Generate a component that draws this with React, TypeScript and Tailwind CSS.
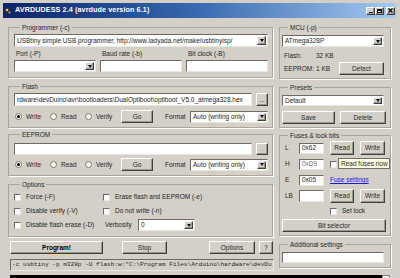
import React from 'react';

const raised =
  'bg-[#d4d0c8] border border-t-white border-l-white border-r-[#404040] border-b-[#404040] shadow-[inset_-1px_-1px_0_#9a968e]';

function Btn({ children, className = '', bold = false }: { children: React.ReactNode; className?: string; bold?: boolean }) {
  return (
    <div className={`flex items-center justify-center shrink-0 ${raised} ${bold ? 'font-bold text-[#000]' : ''} ${className}`}>
      {children}
    </div>
  );
}

function Field({ text = '', className = '', mono = false, gray = false }: { text?: string; className?: string; mono?: boolean; gray?: boolean }) {
  return (
    <div
      className={`flex items-center overflow-hidden whitespace-nowrap bg-white border border-t-[#6f6b64] border-l-[#6f6b64] border-r-[#e8e6e2] border-b-[#e8e6e2] px-[2px] ${
        mono ? "font-['Liberation_Mono',monospace] text-[6.1px]" : ''
      } ${gray ? 'text-[#6a6a6a]' : ''} ${className}`}
    >
      {text}
    </div>
  );
}

function Combo({ text = '', className = '' }: { text?: string; className?: string }) {
  return (
    <div className={`flex bg-white border border-t-[#6f6b64] border-l-[#6f6b64] border-r-[#e8e6e2] border-b-[#e8e6e2] ${className}`}>
      <div className="flex-1 flex items-center overflow-hidden whitespace-nowrap px-[2px]">{text}</div>
      <div className={`w-[9px] my-[1px] mr-[1px] flex items-center justify-center ${raised}`}>
        <div className="w-0 h-0 border-l-[2px] border-r-[2px] border-t-[3px] border-l-transparent border-r-transparent border-t-black" />
      </div>
    </div>
  );
}

function Radio({ label, on = false, className = '' }: { label: string; on?: boolean; className?: string }) {
  return (
    <div className={`flex items-center ${className}`}>
      <div className="w-[7px] h-[7px] rounded-full bg-white border border-[#7a766f] flex items-center justify-center">
        {on && <div className="w-[3px] h-[3px] rounded-full bg-black" />}
      </div>
      <span className="ml-[4px]">{label}</span>
    </div>
  );
}

function Check({ label, className = '' }: { label?: string; className?: string }) {
  return (
    <div className={`flex items-center ${className}`}>
      <div className="w-[7px] h-[7px] bg-white border border-t-[#6f6b64] border-l-[#6f6b64] border-r-[#e8e6e2] border-b-[#e8e6e2]" />
      {label && <span className="ml-[5px]">{label}</span>}
    </div>
  );
}

function Group({ title, className = '', children }: { title: string; className?: string; children: React.ReactNode }) {
  return (
    <fieldset className={`border border-[#a9a59d] shadow-[1px_1px_0_white] ${className}`}>
      <legend className="ml-[6px] px-[2px] h-[9px] leading-[9px]">{title}</legend>
      {children}
    </fieldset>
  );
}

function MemRow() {
  return (
    <div className="flex items-center h-[13px]">
      <Radio label="Write" on className="ml-[1px] w-[35px]" />
      <Radio label="Read" className="w-[35px]" />
      <Radio label="Verify" className="w-[36px]" />
      <Btn className="w-[32px] h-[13px]">Go</Btn>
      <span className="ml-[12px] w-[25px]">Format</span>
      <Combo text="Auto (writing only)" className="flex-1 h-[12px]" />
    </div>
  );
}

function TitleBar() {
  return (
    <div className="flex items-center h-[15px] bg-gradient-to-r from-[#0a246a] via-[#3a6ab0] to-[#a6caf0]">
      <svg width="8" height="8" viewBox="0 0 8 8" className="ml-[1px]">
        <circle cx="4" cy="4" r="3.5" fill="#2a2a2a" />
        <circle cx="3" cy="3" r="1.3" fill="#c8c8c8" />
        <rect x="4.5" y="4.5" width="2" height="2" fill="#9a9a9a" />
      </svg>
      <span className="ml-[3px] text-white font-bold text-[7.2px] tracking-[0.1px]">AVRDUDESS 2.4 (avrdude version 6.1)</span>
      <div className="ml-auto mr-[1px] flex items-center">
        <div className={`w-[9px] h-[8px] flex items-end justify-center pb-[1px] ${raised}`}>
          <div className="w-[4px] h-[1px] bg-black" />
        </div>
        <div className={`w-[9px] h-[8px] flex items-center justify-center ${raised}`}>
          <div className="w-[5px] h-[4px] border border-black border-t-2" />
        </div>
        <div className={`ml-[2px] w-[9px] h-[8px] flex items-center justify-center ${raised}`}>
          <svg width="5" height="5" viewBox="0 0 5 5">
            <path d="M0.5 0.5 L4.5 4.5 M4.5 0.5 L0.5 4.5" stroke="black" strokeWidth="1.1" />
          </svg>
        </div>
      </div>
    </div>
  );
}

export default function App() {
  return (
    <div className="w-[400px] h-[278px] overflow-hidden bg-[#d4d0c8] font-['Liberation_Sans',Arial,sans-serif] text-[6.5px] text-[#262626] border-t-[3px] border-l-[3px] border-r-[4px] border-[#d4d0c8]">
      <TitleBar />
      <div className="flex gap-[6px] pl-[5px] pt-[5px]">
        {/* left column */}
        <div className="w-[265px] flex flex-col">
          <Group title="Programmer (-c)" className="pl-[5px] pr-[4px] pb-[5px]">
            <Combo text="USBtiny simple USB programmer, http://www.ladyada.net/make/usbtinyisp/" className="mt-[2px] h-[13px]" />
            <div className="grid grid-cols-3 gap-x-[4px] mt-[2px]">
              <span className="h-[10px] leading-[10px] pl-[2px]">Port (-P)</span>
              <span className="h-[10px] leading-[10px] pl-[2px]">Baud rate (-b)</span>
              <span className="h-[10px] leading-[10px] pl-[2px]">Bit clock (-B)</span>
              <Combo className="mt-[1px] h-[12px]" />
              <Field className="mt-[1px] h-[12px]" />
              <Field className="mt-[1px] h-[12px]" />
            </div>
          </Group>

          <Group title="Flash" className="mt-[4px] pl-[5px] pr-[4px] pb-[4px]">
            <div className="flex mt-[2px] h-[13px]">
              <Field text="rdware\devDuino\avr\bootloaders\DualOptiboot\optiboot_V5.0_atmega328.hex" className="flex-1" />
              <Btn className="ml-[4px] w-[12px]">...</Btn>
            </div>
            <div className="mt-[4px]">
              <MemRow />
            </div>
          </Group>

          <Group title="EEPROM" className="mt-[2px] pl-[5px] pr-[4px] pb-[4px]">
            <div className="flex mt-[4px] h-[12px]">
              <Field className="flex-1" />
              <Btn className="ml-[4px] w-[12px] text-[#8a8a8a]">...</Btn>
            </div>
            <div className="mt-[3px]">
              <MemRow />
            </div>
          </Group>

          <Group title="Options" className="mt-[4px] pl-[5px] pr-[4px] pb-[4px]">
            <div className="mt-[1px] grid grid-cols-[89px_1fr]">
              <Check label="Force (-F)" className="h-[14px]" />
              <Check label="Erase flash and EEPROM (-e)" className="h-[14px]" />
              <Check label="Disable verify (-V)" className="h-[14px]" />
              <Check label="Do not write (-n)" className="h-[14px]" />
              <Check label="Disable flash erase (-D)" className="h-[14px]" />
              <div className="flex items-center h-[14px]">
                <span className="ml-[2px] w-[33px]">Verbosity</span>
                <Combo text="0" className="w-[57px] h-[12px]" />
              </div>
            </div>
          </Group>

          <div className="flex mt-[4px] ml-[2px] h-[13px]">
            <Btn bold className="w-[93px]">Program!</Btn>
            <Btn className="ml-[19px] w-[45px]">Stop</Btn>
            <Btn className="ml-[42px] w-[46px]">Options</Btn>
            <Btn className="ml-[4px] w-[14px]">?</Btn>
          </div>

          <Field
            mono
            text={'-c usbtiny -p m328p -U flash:w:"C:\\Program Files\\Arduino\\hardware\\devDu'}
            className="mt-[5px] ml-[2px] w-[264px] h-[12px] !bg-[#d4d0c8] !px-[1px]"
          />
        </div>

        {/* right column */}
        <div className="w-[112px] flex flex-col">
          <Group title="MCU (-p)" className="pl-[2px] pr-[6px] pb-[3px]">
            <Combo text="ATmega328P" className="mt-[3px] h-[12px]" />
            <div className="flex items-center mt-[4px] h-[10px] pl-[2px]">
              <span className="w-[32px]">Flash:</span>
              <span>32 KB</span>
            </div>
            <div className="flex items-center mt-[1px] h-[13px] pl-[2px]">
              <span className="w-[32px]">EEPROM:</span>
              <span>1 KB</span>
              <Btn className="ml-auto w-[45px] h-[13px]">Detect</Btn>
            </div>
          </Group>

          <Group title="Presets" className="mt-[4px] pl-[2px] pr-[4px] pb-[3px]">
            <Combo text="Default" className="mt-[3px] mr-[2px] h-[11px]" />
            <div className="flex mt-[5px] h-[13px]">
              <Btn className="w-[53px]">Save</Btn>
              <Btn className="ml-[5px] w-[46px]">Delete</Btn>
            </div>
          </Group>

          <Group title="Fuses & lock bits" className="mt-[3px] pl-[2px] pr-[4px] pb-[3px]">
            <div className="flex items-center h-[16px]">
              <span className="w-[17px] pl-[3px]">L</span>
              <Field text="0x62" className="w-[25px] h-[11px]" />
              <Btn className="ml-[6px] w-[24px] h-[14px] border-[#202020]">Read</Btn>
              <Btn className="ml-[6px] w-[25px] h-[14px]">Write</Btn>
            </div>
            <div className="relative flex items-center h-[16px]">
              <span className="w-[17px] pl-[3px]">H</span>
              <Field text="0xD9" gray className="w-[25px] h-[11px]" />
              <Check className="ml-[6px]" />
              <div className="absolute left-[56px] top-[2px] w-[52px] h-[11px] bg-[#ffffe1] border border-[#6f6f6f] flex items-center pl-[2px] whitespace-nowrap">
                Read fuses now
              </div>
            </div>
            <div className="flex items-center h-[16px]">
              <span className="w-[17px] pl-[3px]">E</span>
              <Field text="0x05" className="w-[25px] h-[11px]" />
              <span className="ml-[6px] text-[#1a1aee] underline">Fuse settings</span>
            </div>
            <div className="flex items-center h-[16px]">
              <span className="w-[17px] pl-[3px]">LB</span>
              <Field className="w-[25px] h-[12px]" />
              <Btn className="ml-[6px] w-[24px] h-[14px]">Read</Btn>
              <Btn className="ml-[6px] w-[25px] h-[14px]">Write</Btn>
            </div>
            <Check label="Set lock" className="h-[14px] ml-[48px]" />
            <Btn className="mt-[1px] w-[104px] h-[13px]">Bit selector</Btn>
          </Group>

          <Group title="Additional settings" className="mt-[4px] pl-[2px] pr-[6px] pb-[4px]">
            <Field className="mt-[3px] h-[11px]" />
          </Group>
        </div>
      </div>

      <div className="flex mt-[4px] ml-[7px] h-[10px]">
        <div className="w-[372px] bg-black" />
        <div className="w-[8px] bg-[#f0f0f0] border border-[#808080]" />
      </div>
    </div>
  );
}
